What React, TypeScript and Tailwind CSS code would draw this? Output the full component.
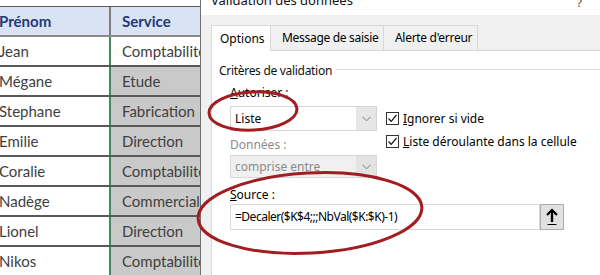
import React from "react";

const rows: [string, string, boolean][] = [
  ["Jean", "Comptabilité", false],
  ["Mégane", "Etude", true],
  ["Stephane", "Fabrication", true],
  ["Emilie", "Direction", true],
  ["Coralie", "Comptabilité", true],
  ["Nadège", "Commercial", true],
  ["Lionel", "Direction", true],
  ["Nikos", "Comptabilité", true],
];

function Check() {
  return (
    <div className="w-[13px] h-[13px] border border-[#333] bg-white flex items-center justify-center shrink-0">
      <svg width="11" height="11" viewBox="0 0 11 11">
        <path d="M1.5 5.5 L4.2 8.3 L9.5 2" fill="none" stroke="#111" strokeWidth="1.2" />
      </svg>
    </div>
  );
}

function Chevron() {
  return (
    <svg width="9" height="6" viewBox="0 0 9 6">
      <path d="M0.5 0.8 L4.5 4.8 L8.5 0.8" fill="none" stroke="#7a7a7a" strokeWidth="1" />
    </svg>
  );
}

export default function App() {
  return (
    <div className="relative w-[600px] h-[275px] overflow-hidden bg-white flex">
      {/* Excel table */}
      <div className="w-[201px] shrink-0 pt-[6px] border-r border-[#6f6f6f] font-['Lato',sans-serif] text-[15px] text-[#404040]">
        <div className="border-t border-[#595959]">
          <div className="flex h-[30px] bg-[#dae3f3] border-b-2 border-[#8a8a8a]">
            <div className="w-[111px] border-r-2 border-[#7f7f7f] flex items-center font-bold text-[#1f3b7a] -indent-[1px]">
              Prénom
            </div>
            <div className="flex-1 flex items-center pl-[11px] font-bold text-[#1f3b7a]">Service</div>
          </div>
          {rows.map(([p, s, grey]) => (
            <div key={p} className="flex h-[30px] border-b-2 border-[#595959]">
              <div className="w-[111px] border-r-2 border-[#3f8b5b] flex items-center -indent-[1px]">{p}</div>
              <div
                className={
                  "flex-1 flex items-center pl-[11px] whitespace-nowrap overflow-hidden " +
                  (grey ? "bg-[#c9c9c9]" : "bg-white")
                }
              >
                {s}
              </div>
            </div>
          ))}
        </div>
      </div>

      {/* Dialog */}
      <div className="flex-1 flex flex-col bg-[#f0f0f0] font-['Noto_Sans',sans-serif] text-[12px] text-black">
        <div className="h-[15px] bg-white relative flex">
          <div className="absolute left-[10px] -top-[8px] text-[13px] leading-[16px] text-[#111] whitespace-nowrap">
            Validation des données
          </div>
          <div className="absolute left-[376px] -top-[5px] text-[11px] leading-[16px] text-[#333]">?</div>
        </div>
        <div className="flex-1 flex flex-col pl-[10px] pt-[10px]">
          {/* tabs */}
          <div className="flex h-[25px] items-end whitespace-nowrap">
            <div className="h-[26px] w-[60px] bg-white border-l border-t border-r border-[#d9d9d9] flex items-center pl-[8px] -mb-px relative z-10">
              Options
            </div>
            <div className="h-[25px] w-[113px] border-t border-r border-[#d9d9d9] flex items-center pl-[11px] tracking-[-0.3px]">
              Message de saisie
            </div>
            <div className="h-[25px] w-[94px] border-t border-r border-[#d9d9d9] flex items-center pl-[11px] tracking-[-0.3px]">
              Alerte d'erreur
            </div>
          </div>
          {/* panel */}
          <div className="flex-1 bg-white border-l border-t border-[#d9d9d9] pl-[7px]">
            <div className="mt-[12px] h-[16px] flex items-center">
              <span className="text-[#111] tracking-[-0.3px] whitespace-nowrap">Critères de validation</span>
              <div className="flex-1 h-px bg-[#dcdcdc] ml-[4px] -mt-[3px]" />
            </div>
            <div className="pl-[11px] mt-[6px]">
              <div className="flex">
                <div className="w-[147px] flex flex-col">
                  <div className="h-[16px] leading-[16px]">
                    <span className="underline">A</span>utoriser :
                  </div>
                  <div className="mt-[5px] h-[25px] border border-[#d4d4d4] flex bg-white">
                    <div className="flex-1 flex items-center pl-[4px]">Liste</div>
                    <div className="w-[20px] bg-[#e6e6e6] flex items-center justify-center">
                      <Chevron />
                    </div>
                  </div>
                  <div className="mt-[6px] h-[16px] leading-[16px] text-[#8a8a8a]">Données :</div>
                  <div className="mt-[2px] h-[23px] border border-[#d9d9d9] flex bg-[#f0f0f0]">
                    <div className="flex-1 flex items-center pl-[4px] text-[#8a8a8a] overflow-hidden whitespace-nowrap">comprise entre</div>
                    <div className="w-[20px] bg-[#e3e3e3] flex items-center justify-center">
                      <Chevron />
                    </div>
                  </div>
                </div>
                <div className="ml-[9px] pt-[27px] flex flex-col gap-[10px] whitespace-nowrap">
                  <div className="flex items-center gap-[4px] h-[13px]">
                    <Check />
                    <span>
                      <span className="underline">I</span>gnorer si vide
                    </span>
                  </div>
                  <div className="flex items-center gap-[4px] h-[13px]">
                    <Check />
                    <span>
                      <span className="underline">L</span>iste déroulante dans la cellule
                    </span>
                  </div>
                </div>
              </div>
              <div className="mt-[9px] h-[16px] leading-[16px]">
                <span className="underline">S</span>ource :
              </div>
              <div className="mt-[1px] flex h-[26px]">
                <div className="w-[310px] border border-[#d9d9d9] flex items-center pl-[4px] bg-white whitespace-nowrap tracking-[-0.5px]">
                  =Decaler($K$4;;;NbVal($K:$K)-1)
                </div>
                <div className="w-[24px] border border-[#adadad] bg-[#e1e1e1] flex items-center justify-center">
                  <svg width="14" height="18" viewBox="0 0 14 18">
                    <path d="M7 2 L7 14" stroke="#000" strokeWidth="2.4" />
                    <path d="M2 7 L7 2 L12 7" fill="none" stroke="#000" strokeWidth="2.2" />
                    <path d="M2.5 16.5 L11.5 16.5" stroke="#000" strokeWidth="1" />
                  </svg>
                </div>
              </div>
            </div>
          </div>
        </div>
      </div>

      {/* red ellipses overlay */}
      <svg className="absolute left-0 top-0 pointer-events-none" width="600" height="275" viewBox="0 0 600 275">
        <ellipse cx="253" cy="111" rx="44" ry="19" fill="none" stroke="#a11d21" strokeWidth="3" transform="rotate(-3 253 111)" />
        <ellipse cx="310" cy="213" rx="112" ry="40" fill="none" stroke="#a11d21" strokeWidth="3" transform="rotate(-3 310 213)" />
      </svg>
    </div>
  );
}
